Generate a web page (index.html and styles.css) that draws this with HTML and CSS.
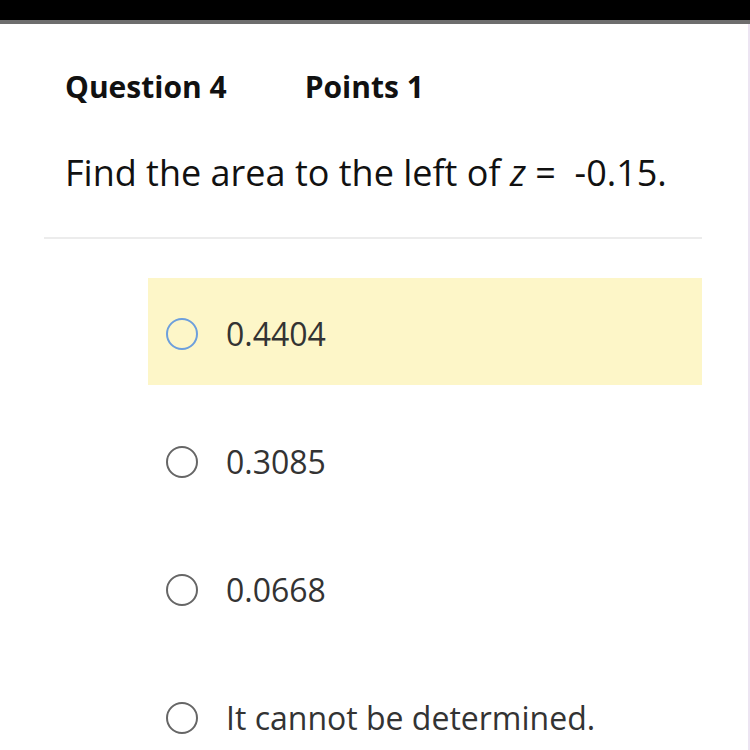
FILE: index.html
```html
<!DOCTYPE html>
<html>
<head>
<meta charset="utf-8">
<link rel="stylesheet" href="styles.css">
</head>
<body>
<div class="topbar"></div>
<main class="page">
  <header class="qhead">
    <span class="qnum">Question 4</span>
    <span class="qpts">Points 1</span>
  </header>
  <p class="qtext">Find the area to the left of <i>z</i> =&nbsp; -0.15.</p>
  <hr class="divider">
  <ul class="options">
    <li class="option selected"><span class="radio"></span><span class="label">0.4404</span></li>
    <li class="option"><span class="radio"></span><span class="label">0.3085</span></li>
    <li class="option"><span class="radio"></span><span class="label">0.0668</span></li>
    <li class="option"><span class="radio"></span><span class="label">It cannot be determined.</span></li>
  </ul>
</main>
</body>
</html>
```
FILE: styles.css
```css
html, body {
  margin: 0;
  padding: 0;
  background: #fff;
  font-family: "Open Sans", "Noto Sans", sans-serif;
  overflow: hidden;
}
.topbar {
  height: 20px;
  background: #000;
  border-bottom: 4px solid #6e6e6e;
}
.page {
  padding: 0 46px 0 44px;
  border-right: 2px solid #ece4f2;
  height: 726px;
}
.qhead {
  display: flex;
  gap: 78px;
  padding: 43px 0 0 21px;
  font-weight: 700;
  font-size: 30px;
  line-height: 40px;
  color: #111;
}
.qtext {
  margin: 0;
  padding: 42px 0 0 21px;
  font-size: 36px;
  line-height: 48px;
  color: #111;
}
.qtext i {
  font-style: italic;
}
.divider {
  border: 0;
  border-top: 2px solid #ececec;
  margin: 40px 0 0 0;
}
.options {
  list-style: none;
  margin: 39px 0 0 104px;
  padding: 0;
  display: flex;
  flex-direction: column;
  gap: 21px;
}
.option {
  height: 107px;
  box-sizing: border-box;
  padding: 4px 0 0 18px;
  display: flex;
  align-items: center;
  gap: 28px;
  font-size: 32px;
  color: #333;
}
.option.selected {
  background: #fdf6c8;
}
.radio {
  width: 28px;
  height: 28px;
  border: 2px solid #666;
  border-radius: 50%;
  flex: none;
}
.selected .radio {
  border-color: #6d9fdc;
}
```
